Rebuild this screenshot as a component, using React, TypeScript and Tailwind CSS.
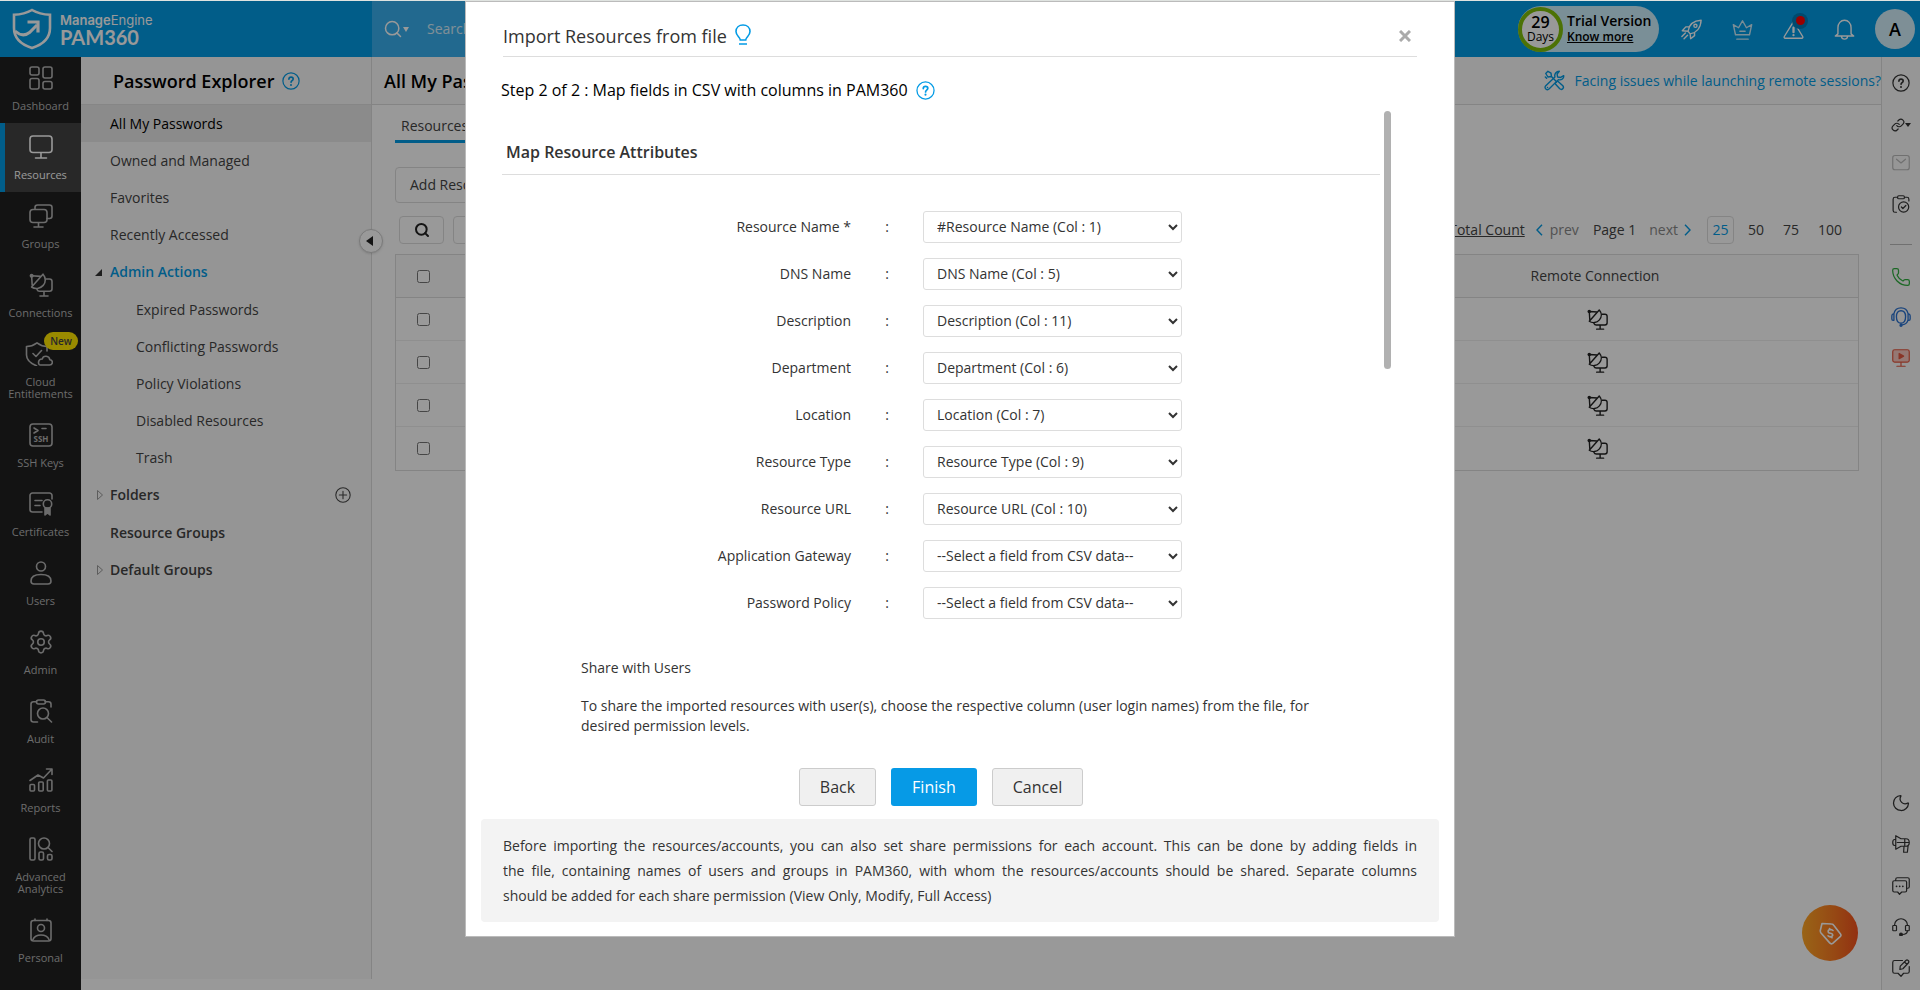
import React, { FC, ReactNode } from "react";
import { Link, Moon, Phone, Search, Settings } from "lucide-react";

interface IconProps {
  className?: string;
  children?: ReactNode;
}

const Icon: FC<IconProps> = ({ className = "size-6", children }) => (
  <svg
    viewBox="0 0 24 24"
    fill="none"
    stroke="currentColor"
    strokeWidth="1.6"
    strokeLinecap="round"
    strokeLinejoin="round"
    className={`shrink-0 ${className}`}
    aria-hidden="true"
  >
    {children}
  </svg>
);

const HelpIcon: FC<IconProps> = ({ className }) => (
  <Icon className={className}>
    <circle cx="12" cy="12" r="10.8" />
    <path d="M9.2 9.6c0-1.7 1.2-2.8 2.9-2.8s2.8 1 2.8 2.5c0 2.3-2.8 2.3-2.8 4.5" strokeWidth="2.2" />
    <path d="M12 17.2v.2" strokeWidth="2.6" />
  </Icon>
);

const DishIcon: FC<IconProps> = ({ className }) => (
  <Icon className={className}>
    <circle cx="2.6" cy="2.8" r="2" fill="currentColor" stroke="none" />
    <path d="m2.6 2.8.6 9.400M2.6 2.8l9.200.6M2.600 14 14 1.200c3 3.400 3 8 .2 11.200-3 3.400-8 4.200-11.600 1.600z" />
    <path d="M17 6h3.500C21.900 6 23 7.100 23 8.500v7.200c0 1.400-1.100 2.500-2.500 2.500H10.500c-1.300 0-2-.5-2.500-1.700M15 18.500v4M11 23h8" />
  </Icon>
);

const Chevron: FC<IconProps> = ({ className = "" }) => (
  <svg viewBox="0 0 7 12" className={`h-3 w-[7px] ${className}`} fill="none" stroke="#039be5" strokeWidth="1.4" aria-hidden="true">
    <path d="m1 .8 5 5.2-5 5.2" />
  </svg>
);

const TreeArrow = () => (
  <svg viewBox="0 0 6 10" className="h-2.5 w-1.5" fill="none" stroke="#999" aria-hidden="true">
    <path d="M.5.5 5.5 5 .5 9.5z" />
  </svg>
);

const navItems: { label: string; icon: ReactNode; active?: boolean; badge?: string }[] = [
  {
    label: "Dashboard",
    icon: (
      <Icon>
        <rect x="1" y="1" width="9" height="8" rx="2" />
        <rect x="14" y="1" width="9" height="11" rx="2" />
        <rect x="1" y="12.5" width="9" height="10.5" rx="2" />
        <rect x="14" y="15.5" width="9" height="7.5" rx="2" />
      </Icon>
    ),
  },
  {
    label: "Resources",
    active: true,
    icon: (
      <Icon>
        <rect x="1" y="1" width="22" height="16.5" rx="3" />
        <path d="M12 18v5M6.5 23h11" />
      </Icon>
    ),
  },
  {
    label: "Groups",
    icon: (
      <Icon>
        <rect x="1" y="5.5" width="17" height="13" rx="3" />
        <path d="M6 5V3.5C6 2.1 7.1 1 8.5 1h12C21.9 1 23 2.1 23 3.5V12c0 1.4-1.1 2.5-2.5 2.5H18M9.5 19v4M5 23h9" />
      </Icon>
    ),
  },
  { label: "Connections", icon: <DishIcon /> },
  {
    label: "Cloud Entitlements",
    badge: "New",
    icon: (
      <Icon className="-ml-1 h-6 w-7">
        <path d="M20 9V4.5C16 4.5 13 3 10 .8 7 3 4 4.500-.5 4.500V13c0 5 4.500 8.500 10 10.800M6 11.500l3 3 5.500-6" />
        <path d="M13.5 23h9c3.500 0 4-5 .3-5.200-.4-4.500-6.600-4.800-7.600-.8-4.400-.2-4.700 6-1.700 6z" />
      </Icon>
    ),
  },
  {
    label: "SSH Keys",
    icon: (
      <Icon>
        <rect x="1" y="1" width="22" height="22" rx="3" />
        <path d="m5 5 4 2.500L5 10M13 5.500h4" />
        <text x="12" y="19" textAnchor="middle" fontSize="8" fontWeight="700" fill="currentColor" stroke="none">
          SSH
        </text>
      </Icon>
    ),
  },
  {
    label: "Certificates",
    icon: (
      <Icon>
        <path d="M13 20H3.500A2.500 2.500 0 0 1 1 17.500v-14A2.500 2.500 0 0 1 3.500 1h17A2.500 2.500 0 0 1 23 3.500V7M6 8.500h7M6 13.500h5" />
        <circle cx="18.500" cy="12" r="4.200" />
        <path d="M16 16v7l2.500-2 2.500 2v-7z" fill="currentColor" />
      </Icon>
    ),
  },
  {
    label: "Users",
    icon: (
      <Icon>
        <circle cx="12" cy="5.5" r="4.5" />
        <path d="M2 20c0-4.500 4.500-6.500 10-6.500s10 2 10 6.500c0 2-1.300 3-3 3H5c-1.700 0-3-1-3-3z" />
      </Icon>
    ),
  },
  { label: "Admin", icon: <Settings className="size-[26px] -m-px" strokeWidth={1.5} /> },
  {
    label: "Audit",
    icon: (
      <Icon>
        <path d="M7.500 2.800H4.500c-1.400 0-2.500 1-2.500 2.500V20.500C2 22 3 23 4.500 23h4M16 2.800h3.500c1.400 0 2.500 1 2.500 2.500V8" />
        <rect x="7.5" y="1" width="9" height="4" rx="2" />
        <circle cx="14" cy="14.5" r="5.5" />
        <path d="m18 18.500 4.500 4.500" />
      </Icon>
    ),
  },
  {
    label: "Reports",
    icon: (
      <Icon>
        <path d="m1 12.500 8-5.500 5.500 3L23 1M17.500 1H23v5.500" />
        <rect x="1" y="16.5" width="4.500" height="6.5" rx="1" />
        <rect x="9.7" y="14" width="4.500" height="9" rx="1" />
        <rect x="18.4" y="12" width="4.500" height="11" rx="1" />
      </Icon>
    ),
  },
  {
    label: "Advanced Analytics",
    icon: (
      <Icon>
        <rect x="1" y="1" width="5" height="22" rx="1.5" />
        <rect x="10" y="15" width="4.5" height="8" rx="1.5" />
        <rect x="18.5" y="17.5" width="4.5" height="5.5" rx="1.5" />
        <circle cx="15" cy="6.5" r="5.5" />
        <path d="m19 10.500 4 4" />
      </Icon>
    ),
  },
  {
    label: "Personal",
    icon: (
      <Icon>
        <rect x="2" y="2.5" width="20" height="20.5" rx="2.5" />
        <path d="M6 2.500V1M18 2.500V1M4 21.500c1.500-3.500 4.500-4.500 8-4.500s6.500 1 8 4.500" />
        <circle cx="12" cy="10" r="3.5" />
      </Icon>
    ),
  },
];

const adminActions = [
  "Expired Passwords",
  "Conflicting Passwords",
  "Policy Violations",
  "Disabled Resources",
  "Trash",
];

const fields = [
  { label: "Resource Name *", value: "#Resource Name (Col : 1)" },
  { label: "DNS Name", value: "DNS Name (Col : 5)" },
  { label: "Description", value: "Description (Col : 11)" },
  { label: "Department", value: "Department (Col : 6)" },
  { label: "Location", value: "Location (Col : 7)" },
  { label: "Resource Type", value: "Resource Type (Col : 9)" },
  { label: "Resource URL", value: "Resource URL (Col : 10)" },
  { label: "Application Gateway", value: "--Select a field from CSV data--" },
  { label: "Password Policy", value: "--Select a field from CSV data--" },
];

const Header = () => (
  <header className="flex h-14 bg-[#039be5] text-white">
    <div className="flex w-[372px] items-center gap-2 pl-3">
      <svg viewBox="0 0 40 42" className="h-[42px] w-10" fill="none" stroke="currentColor" aria-hidden="true">
        <path d="M20 2c5.500 3.200 11 4.500 18 4.700V20c0 9.500-7 16.500-18 20C9 36.500 2 29.500 2 20V6.700C9 6.500 14.500 5.200 20 2z" strokeWidth="2.6" />
        <path d="M3 23c5 4.500 10 5 14.500 1.500L25 17" strokeWidth="3" />
        <path d="M15.500 14H26v10.500" strokeWidth="3.2" />
      </svg>
      <div className="pb-px font-[Inter,sans-serif]">
        <div className="text-[13px] leading-4">
          <b className="font-semibold">Manage</b>Engine
        </div>
        <div className="font-[Lato,sans-serif] text-xl font-bold leading-[18px]">PAM360</div>
      </div>
    </div>
    <div className="flex w-[560px] items-center bg-[#39b0ee] pl-[11px]">
      <Search className="size-5" strokeWidth={1.8} />
      <span className="h-0 w-0 border-x-[3px] border-t-[5px] border-x-transparent border-t-white" />
      <input aria-label="Search" placeholder="Search" className="ml-[18px] w-40 bg-transparent text-sm placeholder:text-white/80" />
    </div>
    <div className="ml-auto flex items-center pr-[5px]">
      <div className="flex h-[46px] w-[141px] items-center gap-1 rounded-full bg-[#cbeefc] text-black">
        <div className="flex size-[45px] flex-col items-center justify-center rounded-full border-4 border-[#7fbf0a] bg-white">
          <b className="text-base font-semibold leading-4">29</b>
          <span className="text-xs leading-[14px]">Days</span>
        </div>
        <div>
          <div className="text-sm font-semibold leading-4">Trial Version</div>
          <a href="#" className="block text-xs font-semibold leading-4 underline">Know more</a>
        </div>
      </div>
      <button aria-label="Quick start" className="ml-[22px]">
        <Icon className="size-[21px]">
          <path d="M8 14c1-6 5-12 15-12.500C22.500 11 17 16 10.500 17zM9 9H5.500L1.500 13.500 8 14M15.500 15.500V19L11 22.500 10.500 17M5 16l-4 4M7.500 18.500l-4 4" />
          <circle cx="16.5" cy="7.8" r="1.8" />
        </Icon>
      </button>
      <button aria-label="Upgrade" className="ml-[30px] opacity-80">
        <Icon className="size-[21px]">
          <path d="M4 18 1.500 6.500 7.500 10 12 2l4.500 8 6-3.500L20 18zM9 14h6M5.500 23h13" />
        </Icon>
      </button>
      <button aria-label="Alerts" className="relative ml-[30px]">
        <Icon className="size-[21px]">
          <path d="M12 3 1.500 20c-.5 1 0 2 1 2h19c1 0 1.500-1 1-2z" />
          <path d="M12 10v5M12 18.300v.2" strokeWidth="2.6" />
        </Icon>
        <span className="absolute -right-1 -top-1.5 flex size-4 items-center justify-center rounded-full bg-[#037cb8]">
          <span className="size-[9px] rounded-full bg-[#ff0000]" />
        </span>
      </button>
      <button aria-label="Notifications" className="ml-[30px]">
        <Icon className="size-[21px]">
          <path d="M4.500 17V10c0-5 3.200-8.500 7.500-8.500s7.500 3.500 7.500 8.500v7l3 2.500H1.500zM8.500 20c.5 4 6.500 4 7 0" />
        </Icon>
      </button>
      <button className="ml-5 size-10 rounded-full bg-[#d3effa] text-lg font-semibold text-black">A</button>
    </div>
  </header>
);

const NavRail = () => (
  <nav className="w-[81px] shrink-0 bg-[#212121] text-[#b4b4b4]">
    {navItems.map((item) => (
      <a
        key={item.label}
        href="#"
        className={`relative flex flex-col items-center gap-2.5 pb-[11px] pt-3 text-center text-[11px] leading-3 first:pt-[9px] ${
          item.active ? "border-l-[5px] border-[#039be5] bg-[#434343] pr-[5px] text-white" : ""
        }`}
      >
        {item.icon}
        <span className="w-[70px]">{item.label}</span>
        {item.badge && (
          <span className="absolute right-[3px] top-0.5 rounded-full bg-[#ffe600] px-1.5 text-[10px] font-semibold leading-[18px] text-[#444]">
            {item.badge}
          </span>
        )}
      </a>
    ))}
  </nav>
);

const Explorer = () => (
  <aside className="relative mb-[11px] w-[291px] shrink-0 border-r border-[#dcdcdc] bg-[#f9f9f9] text-sm text-[#444]">
    <div className="flex h-12 items-center gap-2 border-b border-[#e0e0e0] pl-8">
      <h2 className="text-lg font-semibold text-black">Password Explorer</h2>
      <HelpIcon className="size-[18px] text-[#039be5]" />
    </div>
    <a href="#" className="flex h-[37px] items-center bg-[#e8e8e8] pl-[29px] text-black">All My Passwords</a>
    <a href="#" className="flex h-[37px] items-center pl-[29px]">Owned and Managed</a>
    <a href="#" className="flex h-[37px] items-center pl-[29px]">Favorites</a>
    <a href="#" className="flex h-[37px] items-center pl-[29px]">Recently Accessed</a>
    <a href="#" className="flex h-[38px] items-center gap-2 pl-3.5 font-semibold text-[#039be5]">
      <svg viewBox="0 0 7 7" className="size-[7px]" aria-hidden="true">
        <path d="M7 0v7H0z" fill="#333" />
      </svg>
      Admin Actions
    </a>
    {adminActions.map((action) => (
      <a key={action} href="#" className="flex h-[37px] items-center pl-[55px]">{action}</a>
    ))}
    <div className="flex h-[38px] items-center justify-between pr-5 font-semibold">
      <a href="#" className="flex items-center gap-[7px] pl-4">
        <TreeArrow />
        Folders
      </a>
      <button aria-label="Add folder">
        <Icon className="size-4">
          <circle cx="12" cy="12" r="10.8" />
          <path d="M12 6.500v11M6.500 12h11" />
        </Icon>
      </button>
    </div>
    <a href="#" className="flex h-[37px] items-center pl-[29px] font-semibold">Resource Groups</a>
    <a href="#" className="flex h-[37px] items-center gap-[7px] pl-4 font-semibold">
      <TreeArrow />
      Default Groups
    </a>
    <button
      aria-label="Collapse panel"
      className="absolute -right-3 top-[172px] flex size-6 items-center justify-center rounded-full border border-[#ccc] bg-white shadow"
    >
      <svg viewBox="0 0 7 10" className="mr-1 h-2.5 w-[7px]" aria-hidden="true">
        <path d="M7 0v10L0 5z" fill="#222" />
      </svg>
    </button>
  </aside>
);

const Content = () => (
  <main className="min-w-0 flex-1 bg-white text-sm text-[#444]">
    <div className="flex h-12 items-center justify-between border-b border-[#dcdcdc] bg-[#fafafa] pl-3">
      <h1 className="text-lg font-semibold text-black">All My Passwords</h1>
      <a href="#" className="flex items-center gap-2.5 text-[#039be5]">
        <Icon className="size-[21px]">
          <path d="m8.500 7.500 5 5M2 4l2.500-2.500L8 3.500l.5 4-4 .5zM1.500 8 3 9.500M15.500 12.500l6 5.500c2 2.500-1 5.500-3.500 3.500l-5.500-6z" />
          <path d="M22.500 6.500c.5 3-2.500 5.500-6 4.500L6 21.500C3.500 24-.5 20.500 2 18L12.500 8c-1-3.500 1.500-6.500 5-6.500L15 4.500l.5 3.500 3.500.5zM4 20h.1" />
        </Icon>
        Facing issues while launching remote sessions?
      </a>
    </div>
    <div className="pl-[23px] pr-[22px]">
      <a href="#" className="block w-fit border-b-[3px] border-[#039be5] px-1.5 pb-1 pt-[11px] leading-5">Resources</a>
      <button className="mt-6 block h-9 rounded-sm border border-[#ddd] px-3.5">Add Resource</button>
      <div className="mt-[13px] flex items-center pl-1">
        <button aria-label="Search table" className="flex h-7 w-[45px] items-center justify-center rounded border border-[#ddd] text-[#222]">
          <Search className="size-4" strokeWidth={3} />
        </button>
        <button aria-label="Columns" className="ml-[9px] h-7 w-11 rounded border border-[#ddd]" />
        <div className="ml-auto flex items-center pr-[17px]">
          <a href="#" className="underline">Total Count</a>
          <Chevron className="ml-[11px] -scale-x-100" />
          <span className="ml-[7px] text-[#888]">prev</span>
          <span className="ml-3.5">Page 1</span>
          <span className="ml-[13px] text-[#888]">next</span>
          <Chevron className="ml-1.5" />
          <button className="ml-4 h-7 w-[27px] rounded border border-[#ddd] text-[#039be5]">25</button>
          <button className="ml-3.5">50</button>
          <button className="ml-[19px]">75</button>
          <button className="ml-[19px]">100</button>
        </div>
      </div>
      <table className="mt-2.5 w-full border-separate border-spacing-0 border border-[#ddd]">
        <thead>
          <tr className="h-[43px] bg-[#fafafa]">
            <th className="border-b border-[#ddd] pl-[21px] text-left">
              <input type="checkbox" aria-label="Select all" className="block size-[13px]" />
            </th>
            <th className="w-[398px] border-b border-[#ddd] pr-2 font-normal">Remote Connection</th>
            <th className="w-[60px] border-b border-[#ddd]" />
          </tr>
        </thead>
        <tbody>
          {[1, 2, 3, 4].map((row) => (
            <tr key={row} className="h-[43px] [&:not(:last-child)>td]:border-b [&>td]:border-[#eee]">
              <td className="pl-[21px]">
                <input type="checkbox" aria-label={`Select resource ${row}`} className="block size-[13px]" />
              </td>
              <td className="pr-1">
                <button aria-label="Connect" className="mx-auto block text-[#222]">
                  <DishIcon className="size-[21px]" />
                </button>
              </td>
              <td />
            </tr>
          ))}
        </tbody>
      </table>
    </div>
  </main>
);

const ToolBar = () => (
  <div className="flex w-[39px] shrink-0 flex-col items-center border-l border-[#dcdcdc] bg-[#fafafa] text-[#333]">
    <button aria-label="Help" className="mt-[17px]"><HelpIcon className="size-[18px]" /></button>
    <button aria-label="Links" className="mt-[26px] flex items-center">
      <Link className="size-3.5" strokeWidth={2} />
      <span className="h-0 w-0 border-x-[3px] border-t-4 border-x-transparent border-t-[#333]" />
    </button>
    <button aria-label="Mail" className="mt-[22px] text-[#bbb]">
      <Icon className="size-[18px]">
        <rect x="1" y="2" width="22" height="19" rx="3" />
        <path d="m6 7 6 5 6-5" />
      </Icon>
    </button>
    <button aria-label="Tasks" className="mt-[23px]">
      <Icon className="size-[18px]">
        <path d="M7 3H4C2.500 3 1.500 4 1.500 5.500v15C1.500 22 2.500 23 4 23h2M17 3h3c1.500 0 2.500 1 2.500 2.500V8" />
        <rect x="7.5" y="1" width="9" height="4" rx="1.5" />
        <circle cx="15.5" cy="16" r="6.8" />
        <path d="m12.500 16 2 2 4-4" />
      </Icon>
    </button>
    <hr className="mt-[31px] w-[22px] border-[#bbb]" />
    <button aria-label="Call" className="mt-[22px] text-[#2fae3f]"><Phone className="size-5" strokeWidth={1.5} /></button>
    <button aria-label="Live support" className="mt-5 text-[#2b72d0]">
      <Icon className="size-5">
        <path d="M12 4.500c3.500 0 5.500 2.500 5.500 7s-2 8-5.500 8-5.500-3.500-5.500-8 2-7 5.500-7zM3.500 8C4.500 3.500 8 1 12 1s7.500 2.500 8.500 7v7c-.5 3.500-3.500 6-7 6.500M3.500 8v8H2.500C1.500 16 1 15.500 1 14.500v-4C1 9.500 1.500 8.500 3.500 8zM20.500 8v8h1c1 0 1.500-.5 1.500-1.500v-4c0-1-.5-2-2.500-2.500z" />
        <circle cx="12" cy="22" r="1.2" fill="currentColor" />
      </Icon>
    </button>
    <button aria-label="Videos" className="mt-[22px] text-[#e4573f]">
      <Icon className="size-[18px]">
        <rect x="1" y="1" width="22" height="16.5" rx="2.5" fill="#f9c9c0" />
        <path d="M12 18v4.500M6.500 23h11" />
        <path d="M9.500 6v7l6-3.500z" fill="currentColor" />
      </Icon>
    </button>
    <button aria-label="Night mode" className="mt-auto"><Moon className="size-5" strokeWidth={1.5} /></button>
    <button aria-label="Announcements" className="mt-[22px]">
      <Icon className="size-[18px]">
        <path d="M5 1v18l7-4h6.500c2.500 0 4.500-2 4.500-5s-2-5-4.500-5H12zM5 6H3.500C2 6 1 7.800 1 10s1 4 2.500 4H5M17 5v10M7 10h16M16 15l-.5 8h5l1-9" />
      </Icon>
    </button>
    <button aria-label="Feedback" className="mt-6">
      <Icon className="size-[18px]">
        <path d="M5 4.500V3c0-1 .8-2 2-2h14c1.200 0 2 1 2 2v10c0 1.200-.8 2-2 2h-1" />
        <path d="M3 5h14.500c1.200 0 2 .8 2 2v11c0 1.200-.8 2-2 2H13l-3 3-2.500-3H3c-1.200 0-2-.8-2-2V7c0-1.200.8-2 2-2z" />
        <path d="M6 12.500h.1M10.200 12.500h.1M14.400 12.500h.1" strokeWidth="2.2" />
      </Icon>
    </button>
    <button aria-label="Contact support" className="mt-[23px]">
      <Icon className="size-[18px]">
        <path d="M3.500 10v-1C3.500 4.500 7.500 1 12 1s8.500 3.500 8.500 8v1M20.500 17c0 3-3 5-7 5" />
        <rect x="1" y="10" width="5" height="7" rx="1" />
        <rect x="18" y="10" width="5" height="7" rx="1" />
        <circle cx="12" cy="22" r="1.8" fill="currentColor" />
      </Icon>
    </button>
    <button aria-label="Write feedback" className="mb-[13px] mt-[23px]">
      <Icon className="size-[18px]">
        <path d="M14 2H3.500C2 2 1 3 1 4.500v12C1 18 2 19 3.500 19H8l4 4 3.500-4h5c1.500 0 2.500-1 2.500-2.500V10" />
        <path d="m10.500 14 .5-4.500L18.500 2c2-1.800 5 .8 3.500 3L14.500 13zM16.500 4l3.500 3" />
      </Icon>
    </button>
  </div>
);

const ImportDialog = () => (
  <div
    role="dialog"
    aria-labelledby="import-title"
    className="flex w-full max-w-[990px] flex-col border border-[#bbb] bg-white text-sm text-[#333]"
  >
    <div className="mx-[37px] flex h-[55px] items-center border-b border-[#ddd] pt-3.5">
      <h2 id="import-title" className="text-lg">Import Resources from file</h2>
      <svg viewBox="0 0 16 21" className="mb-1 ml-2 h-[21px] w-4 text-[#039be5]" fill="none" stroke="currentColor" strokeWidth="1.6" aria-hidden="true">
        <path d="M5.300 16c0-3-4.300-4-4.300-8.500C1 3.500 4 1 8 1s7 2.500 7 6.500c0 4.500-4.300 5.500-4.300 8.500zM4 20h8" />
      </svg>
      <button aria-label="Close" className="ml-auto mr-1.5 text-[#aaa]">
        <svg viewBox="0 0 12 12" className="size-3" stroke="currentColor" strokeWidth="3" aria-hidden="true">
          <path d="m1 1 10 10M11 1 1 11" />
        </svg>
      </button>
    </div>
    <div className="ml-[35px] mt-[21px] flex h-6 items-center gap-2 text-base text-black">
      Step 2 of 2 : Map fields in CSV with columns in PAM360
      <HelpIcon className="size-[19px] text-[#039be5]" />
    </div>

    <div className="ml-9 mr-[63px] mt-[9px] flex h-[636px] gap-1">
      <div className="flex-1 overflow-hidden">
        <h3 className="border-b border-[#ddd] pb-2.5 pl-1 pt-[29px] text-base font-semibold">Map Resource Attributes</h3>
        <div className="mt-7">
          {fields.map((field, i) => (
            <div key={field.label} className="flex h-[47px] items-center">
              <label htmlFor={`field-${i}`} className="w-[349px] text-right">{field.label}</label>
              <span className="w-[72px] text-center">:</span>
              <select id={`field-${i}`} className="h-8 w-[259px] rounded-[3px] border border-[#ddd] bg-white pl-[9px] pr-px">
                <option>{field.value}</option>
              </select>
            </div>
          ))}
        </div>
        <div className="ml-[79px] mt-8 w-[780px] leading-5">
          <h4>Share with Users</h4>
          <p className="mt-[18px]">
            To share the imported resources with user(s), choose the respective column (user login names) from the file, for
            desired permission levels.
          </p>
        </div>
      </div>
      <div className="h-[258px] w-[7px] rounded-full bg-[#b1b1b1]" />
    </div>

    <div className="mr-[38px] mt-[21px] flex justify-center gap-[15px] text-base">
      <button className="h-[38px] rounded-[3px] border border-[#ccc] bg-[#f0f0f0] px-5">Back</button>
      <button className="h-[38px] rounded-[3px] bg-[#069ae6] px-[21px] text-white">Finish</button>
      <button className="h-[38px] rounded-[3px] border border-[#ccc] bg-[#f0f0f0] px-5">Cancel</button>
    </div>
    <p className="mx-[15px] mb-3.5 mt-[13px] rounded bg-[#f3f3f3] px-[22px] py-3.5 text-justify leading-[25px]">
      Before importing the resources/accounts, you can also set share permissions for each account. This can be done by
      adding fields in the&nbsp;file,&nbsp;containing names of users and groups in PAM360, with whom the resources/accounts
      should be shared. Separate columns should&nbsp;be&nbsp;added&nbsp;for each share permission (View Only, Modify, Full
      Access)
    </p>
  </div>
);

const App: FC = () => {
  return (
    <div className="relative flex min-h-screen flex-col border-t border-[#dfe3e0] font-['Open_Sans',sans-serif]">
      <Header />
      <div className="flex flex-1">
        <NavRail />
        <Explorer />
        <Content />
        <ToolBar />
      </div>
      <button
        aria-label="Pricing"
        className="absolute bottom-[29px] right-[62px] flex size-14 items-center justify-center rounded-full bg-linear-to-r from-[#ffa726] to-[#f4511e] text-white"
      >
        <Icon className="size-6">
          <path d="M4 2.500 13.500 3c1 0 1.500.3 2 1L22.500 13c.7 1 .5 2-.3 2.700l-7.500 6.600c-1 .8-2 .8-2.800-.2L3 12c-.6-.8-.8-1.500-.7-2.500z" />
          <path d="M15 9.500c-2.500-2-6-.5-4.500 2 .8 1.300 3.200.3 4 1.800 1.200 2.200-2.500 3.500-4.500 1.500M11.500 7.500l.5 1.200M13.500 15.500l.5 1.200" />
        </Icon>
      </button>
      <div className="absolute inset-0 flex items-start justify-center bg-black/40">
        <ImportDialog />
      </div>
    </div>
  );
};

export default App;
